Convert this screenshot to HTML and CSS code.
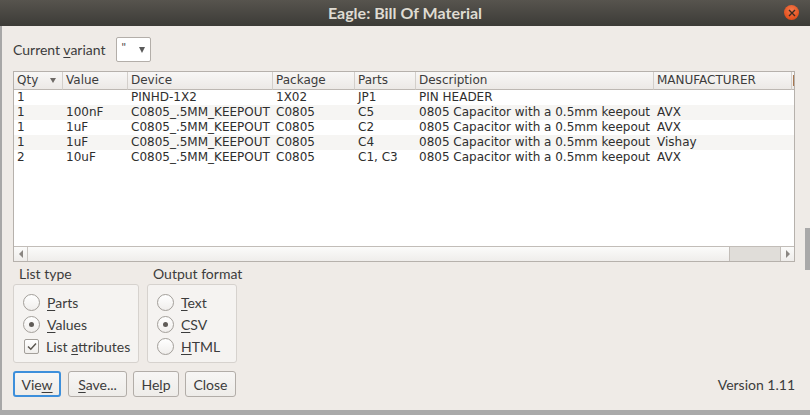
FILE: index.html
```html
<!DOCTYPE html>
<html>
<head>
<meta charset="utf-8">
<link rel="stylesheet" href="styles.css">
</head>
<body>
<div class="window">
  <div class="titlebar">
    <span class="title">Eagle: Bill Of Material</span>
    <span class="close"><svg width="8" height="8" viewBox="0 0 8 8"><path d="M1 1L7 7M7 1L1 7" stroke="#3a2a20" stroke-width="1.4"/></svg></span>
  </div>
  <div class="content">
    <div class="variant-row">
      <span class="label">Current <u>v</u>ariant</span>
      <div class="combo"><span class="combo-text">"</span><span class="combo-arrow"></span></div>
    </div>
    <div class="table-frame">
      <div class="table-view">
        <table class="bom">
          <colgroup>
            <col class="c-qty"><col class="c-val"><col class="c-dev"><col class="c-pkg"><col class="c-parts"><col class="c-desc"><col class="c-man"><col class="c-extra">
          </colgroup>
          <thead>
            <tr>
              <th><div class="th-sort">Qty<span class="sort-arrow"></span></div></th>
              <th>Value</th><th>Device</th><th>Package</th><th>Parts</th><th>Description</th><th>MANUFACTURER</th><th><span class="cut-mark"></span></th>
            </tr>
          </thead>
          <tbody>
            <tr><td>1</td><td></td><td>PINHD-1X2</td><td>1X02</td><td>JP1</td><td>PIN HEADER</td><td></td><td></td></tr>
            <tr class="alt"><td>1</td><td>100nF</td><td>C0805_.5MM_KEEPOUT</td><td>C0805</td><td>C5</td><td>0805 Capacitor with a 0.5mm keepout</td><td>AVX</td><td></td></tr>
            <tr><td>1</td><td>1uF</td><td>C0805_.5MM_KEEPOUT</td><td>C0805</td><td>C2</td><td>0805 Capacitor with a 0.5mm keepout</td><td>AVX</td><td></td></tr>
            <tr class="alt"><td>1</td><td>1uF</td><td>C0805_.5MM_KEEPOUT</td><td>C0805</td><td>C4</td><td>0805 Capacitor with a 0.5mm keepout</td><td>Vishay</td><td></td></tr>
            <tr><td>2</td><td>10uF</td><td>C0805_.5MM_KEEPOUT</td><td>C0805</td><td>C1, C3</td><td>0805 Capacitor with a 0.5mm keepout</td><td>AVX</td><td></td></tr>
          </tbody>
        </table>
      </div>
      <div class="hscroll">
        <div class="sb-btn"><span class="tri-left"></span></div>
        <div class="sb-track"></div>
        <div class="sb-thumb"></div>
        <div class="sb-btn"><span class="tri-right"></span></div>
      </div>
    </div>
    <div class="groups">
      <div class="group g1">
        <div class="group-label">List type</div>
        <div class="group-box">
          <div class="opt"><span class="radio"></span><span><u>P</u>arts</span></div>
          <div class="opt"><span class="radio on"></span><span><u>V</u>alues</span></div>
          <div class="opt"><span class="check"><svg width="10" height="9" viewBox="0 0 10 9"><path d="M1 4.5L3.8 7.2L9 1.5" fill="none" stroke="#5a5650" stroke-width="1.5"/></svg></span><span>List <u>a</u>ttributes</span></div>
        </div>
      </div>
      <div class="group g2">
        <div class="group-label">Output format</div>
        <div class="group-box">
          <div class="opt"><span class="radio"></span><span><u>T</u>ext</span></div>
          <div class="opt"><span class="radio on"></span><span><u>C</u>SV</span></div>
          <div class="opt"><span class="radio"></span><span><u>H</u>TML</span></div>
        </div>
      </div>
    </div>
    <div class="button-row">
      <button class="btn focus">Vie<u>w</u></button>
      <button class="btn"><u>S</u>ave...</button>
      <button class="btn">He<u>l</u>p</button>
      <button class="btn">Close</button>
      <span class="version">Version 1.11</span>
    </div>
  </div>
  <div class="edge-strip"></div>
</div>
</body>
</html>
```

FILE: styles.css
```css
html, body {
  margin: 0;
  padding: 0;
}
body {
  background: #a9a9a9;
  width: 810px;
  height: 415px;
  overflow: hidden;
  font-family: "Lato", "Open Sans", sans-serif;
  font-size: 14px;
  color: #3c3c3c;
}
u { text-decoration: underline; text-underline-offset: 2px; }
.window {
  width: 810px;
  height: 410px;
  display: flex;
  flex-direction: column;
  background: #efebe7;
  position: relative;
}
.edge-strip {
  position: absolute;
  right: 0;
  top: 228px;
  width: 5px;
  height: 42px;
  background: #a9a9a9;
}
.titlebar {
  height: 26px;
  flex: none;
  background: linear-gradient(#57544e, #3c3b37);
  display: flex;
  align-items: center;
  justify-content: center;
  position: relative;
}
.title {
  color: #dfdbd2;
  font-weight: bold;
  font-size: 16px;
  margin-top: -2px;
}
.close {
  position: absolute;
  right: 11px;
  top: 5px;
  width: 15px;
  height: 15px;
  border-radius: 50%;
  background: radial-gradient(circle at 50% 35%, #f47a4d, #e2501d 70%, #c94315);
  display: flex;
  align-items: center;
  justify-content: center;
}
.close svg { display: block; }
.content {
  flex: 1;
  border-left: 2px solid #a7a7a7;
  padding: 11px 15px 0 11px;
  display: flex;
  flex-direction: column;
}
.variant-row {
  display: flex;
  align-items: center;
  height: 25px;
  gap: 10px;
}
.label { white-space: nowrap; }
.combo {
  height: 23px;
  width: 23px;
  border: 1px solid #b3aea9;
  border-radius: 2px;
  background: #fff;
  display: flex;
  align-items: center;
  justify-content: space-between;
  padding: 0 5px 0 5px;
  box-sizing: content-box;
}
.combo-text { font-size: 12px; margin-top: -6px; color: #4c4c4c; }
.combo-arrow {
  width: 0; height: 0;
  border-left: 3.5px solid transparent;
  border-right: 3.5px solid transparent;
  border-top: 6px solid #5a5a5a;
}
.table-frame {
  margin-top: 9px;
  width: 780px;
  height: 189px;
  border: 1px solid #b6b1ac;
  display: flex;
  flex-direction: column;
  background: #fff;
}
.table-view {
  flex: 1;
  overflow: hidden;
}
.bom {
  table-layout: fixed;
  border-collapse: separate;
  border-spacing: 0;
  width: 878px;
  font-family: "DejaVu Sans", sans-serif;
  font-size: 12px;
  color: #2e2e2e;
}
.c-qty { width: 49px; }
.c-val { width: 65px; }
.c-dev { width: 145px; }
.c-pkg { width: 82px; }
.c-parts { width: 61px; }
.c-desc { width: 238px; }
.c-man { width: 138px; }
.c-extra { width: 100px; }
.bom th {
  height: 17px;
  padding: 0 0 0 3px;
  text-align: left;
  font-weight: normal;
  color: #3c3c3c;
  background: linear-gradient(#f8f7f6, #ece9e6);
  border-right: 1px solid #d3cfcb;
  border-bottom: 1px solid #bdb8b3;
  white-space: nowrap;
  overflow: hidden;
  line-height: 17px;
}
.cut-mark {
  display: inline-block;
  width: 2px;
  height: 11px;
  vertical-align: middle;
  background: #a9774f;
  margin-left: -2px;
}
.th-sort {
  display: flex;
  align-items: center;
  justify-content: space-between;
  padding-right: 6px;
}
.sort-arrow {
  width: 0; height: 0;
  border-left: 3.5px solid transparent;
  border-right: 3.5px solid transparent;
  border-top: 5px solid #6e6a66;
}
.bom td {
  height: 15px;
  line-height: 15px;
  padding: 0 0 0 3px;
  white-space: nowrap;
  overflow: hidden;
}
.bom tr.alt td { background: #f6f5f3; }
.hscroll {
  height: 14px;
  flex: none;
  border-top: 1px solid #c2bdb8;
  display: flex;
  background: linear-gradient(#fbfbfa, #efedeb);
}
.sb-btn {
  width: 13px;
  display: flex;
  align-items: center;
  justify-content: center;
}
.sb-btn:first-child { border-right: 1px solid #c9c5c1; }
.sb-btn:last-child { border-left: 1px solid #c2bdb8; }
.sb-track { flex: 1; }
.sb-thumb {
  width: 50px;
  background: #e0ddd9;
  border-left: 1px solid #c2bdb8;
}
.tri-left {
  width: 0; height: 0;
  border-top: 4px solid transparent;
  border-bottom: 4px solid transparent;
  border-right: 4px solid #8a8682;
}
.tri-right {
  width: 0; height: 0;
  border-top: 4px solid transparent;
  border-bottom: 4px solid transparent;
  border-left: 4px solid #8a8682;
}
.groups {
  display: flex;
  gap: 8px;
  margin-top: 2px;
}
.group-label {
  height: 19px;
  line-height: 19px;
  padding-left: 6px;
  margin-bottom: 1px;
  white-space: nowrap;
}
.group-box {
  border: 1px solid #d6d2ce;
  border-radius: 3px;
  background: #f5f3f1;
  height: 79px;
  box-sizing: border-box;
  padding: 9px 0 0 9px;
  display: flex;
  flex-direction: column;
  gap: 6px;
}
.g1 .group-box { width: 126px; }
.g2 .group-box { width: 90px; }
.opt {
  display: flex;
  align-items: center;
  height: 16px;
  gap: 7px;
  white-space: nowrap;
}
.radio {
  width: 15px;
  height: 15px;
  border: 1px solid #a39f9a;
  border-radius: 50%;
  background: linear-gradient(#ffffff, #f0eeec);
  display: flex;
  align-items: center;
  justify-content: center;
  flex: none;
}
.radio.on::after {
  content: "";
  width: 5px;
  height: 5px;
  border-radius: 50%;
  background: #605c58;
}
.check {
  width: 13px;
  height: 13px;
  margin-left: 1px;
  border: 1px solid #a39f9a;
  border-radius: 2px;
  background: linear-gradient(#ffffff, #f0eeec);
  display: flex;
  align-items: center;
  justify-content: center;
  flex: none;
}
.button-row {
  margin-top: 8px;
  display: flex;
  align-items: center;
  gap: 6px;
}
.btn {
  height: 26px;
  font-family: inherit;
  font-size: 14px;
  color: #3c3c3c;
  background: linear-gradient(#f7f6f5, #eeece9);
  border: 1px solid #b2ada8;
  border-radius: 3px;
  padding: 0 4px;
  margin: 0;
}
.btn.focus {
  border: 2px solid #3d8fdb;
  padding: 0 3px;
  margin-right: 1px;
}
.btn:nth-child(1) { width: 48px; }
.btn:nth-child(2) { width: 59px; }
.btn:nth-child(3) { width: 46px; }
.btn:nth-child(4) { width: 51px; }
.version {
  margin-left: auto;
  margin-right: 0;
  white-space: nowrap;
}
```
